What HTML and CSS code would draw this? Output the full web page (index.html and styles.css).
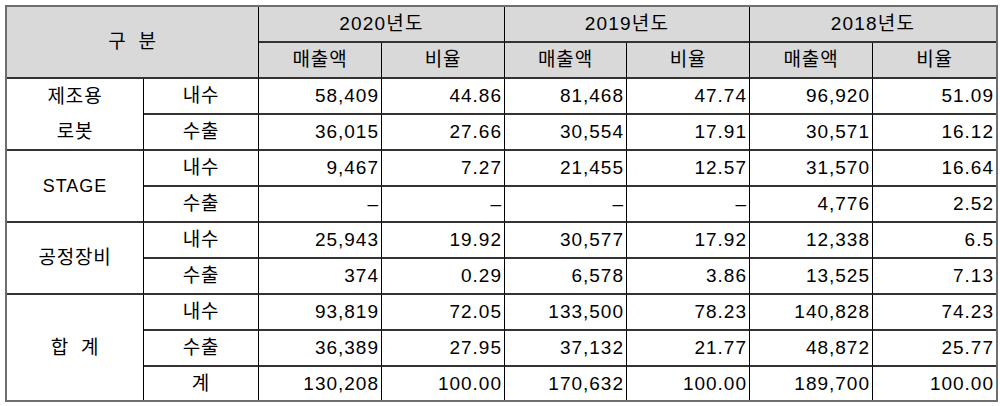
FILE: index.html
```html
<!DOCTYPE html>
<html lang="ko">
<head>
<meta charset="utf-8">
<title>매출 현황</title>
<link rel="stylesheet" href="styles.css">
</head>
<body>
<div class="wrap">
<table class="sales">
  <colgroup>
    <col class="c-cat">
    <col class="c-sub">
    <col class="c-a">
    <col class="c-a">
    <col class="c-b">
    <col class="c-a">
    <col class="c-a">
    <col class="c-a">
  </colgroup>
  <thead>
    <tr>
      <th class="gubun" colspan="2" rowspan="2">구&nbsp;&nbsp;분</th>
      <th class="year" colspan="2">2020년도</th>
      <th class="year" colspan="2">2019년도</th>
      <th class="year" colspan="2">2018년도</th>
    </tr>
    <tr>
      <th>매출액</th><th>비율</th>
      <th>매출액</th><th>비율</th>
      <th>매출액</th><th>비율</th>
    </tr>
  </thead>
  <tbody>
    <tr>
      <td class="cat two-line" rowspan="2">제조용<br>로봇</td>
      <td class="sub">내수</td>
      <td class="num">58,409</td><td class="num">44.86</td>
      <td class="num">81,468</td><td class="num">47.74</td>
      <td class="num">96,920</td><td class="num">51.09</td>
    </tr>
    <tr>
      <td class="sub">수출</td>
      <td class="num">36,015</td><td class="num">27.66</td>
      <td class="num">30,554</td><td class="num">17.91</td>
      <td class="num">30,571</td><td class="num">16.12</td>
    </tr>
    <tr>
      <td class="cat latin" rowspan="2">STAGE</td>
      <td class="sub">내수</td>
      <td class="num">9,467</td><td class="num">7.27</td>
      <td class="num">21,455</td><td class="num">12.57</td>
      <td class="num">31,570</td><td class="num">16.64</td>
    </tr>
    <tr>
      <td class="sub">수출</td>
      <td class="num">–</td><td class="num">–</td>
      <td class="num">–</td><td class="num">–</td>
      <td class="num">4,776</td><td class="num">2.52</td>
    </tr>
    <tr>
      <td class="cat" rowspan="2">공정장비</td>
      <td class="sub">내수</td>
      <td class="num">25,943</td><td class="num">19.92</td>
      <td class="num">30,577</td><td class="num">17.92</td>
      <td class="num">12,338</td><td class="num">6.5</td>
    </tr>
    <tr>
      <td class="sub">수출</td>
      <td class="num">374</td><td class="num">0.29</td>
      <td class="num">6,578</td><td class="num">3.86</td>
      <td class="num">13,525</td><td class="num">7.13</td>
    </tr>
    <tr>
      <td class="cat total" rowspan="3">합&nbsp;&nbsp;계</td>
      <td class="sub">내수</td>
      <td class="num">93,819</td><td class="num">72.05</td>
      <td class="num">133,500</td><td class="num">78.23</td>
      <td class="num">140,828</td><td class="num">74.23</td>
    </tr>
    <tr>
      <td class="sub">수출</td>
      <td class="num">36,389</td><td class="num">27.95</td>
      <td class="num">37,132</td><td class="num">21.77</td>
      <td class="num">48,872</td><td class="num">25.77</td>
    </tr>
    <tr class="last-row">
      <td class="sub">계</td>
      <td class="num">130,208</td><td class="num">100.00</td>
      <td class="num">170,632</td><td class="num">100.00</td>
      <td class="num">189,700</td><td class="num">100.00</td>
    </tr>
  </tbody>
</table>
</div>
</body>
</html>
```

FILE: styles.css
```css
html, body {
  margin: 0;
  padding: 0;
  background: #ffffff;
}

.wrap {
  padding: 5px 0 0 5px;
}

.sales {
  width: 993px;
  table-layout: fixed;
  border-collapse: separate;
  border-spacing: 0;
  border: 2px solid #6e6e6e;
  font-family: "Liberation Sans", "Noto Sans CJK KR", sans-serif;
  color: #000;
}

.c-cat { width: 137px; }
.c-sub { width: 115px; }
.c-a { width: 123px; }
.c-b { width: 122px; }

.sales tr {
  height: 36px;
}

.sales tr.last-row {
  height: 33px;
}

.sales th,
.sales td {
  padding: 0;
  border-right: 1px solid #000;
  border-bottom: 2px solid #333;
  font-size: 19px;
  font-weight: 400;
  letter-spacing: 0.8px;
  line-height: 22px;
  text-align: center;
  vertical-align: middle;
  white-space: nowrap;
  overflow: hidden;
}

.sales tr > :last-child {
  border-right: 0;
}

.sales tbody tr.last-row td,
.sales td.total {
  border-bottom: 0;
}

.sales th {
  background: #d9d9d9;
}

.sales th.year {
  letter-spacing: 1.2px;
}

.sales td.two-line {
  line-height: 35px;
}

.sales td.num {
  text-align: right;
  font-size: 19px;
  letter-spacing: 1px;
  padding-right: 2px;
}

.sales td.latin {
  font-size: 18px;
  letter-spacing: 1px;
}
```
